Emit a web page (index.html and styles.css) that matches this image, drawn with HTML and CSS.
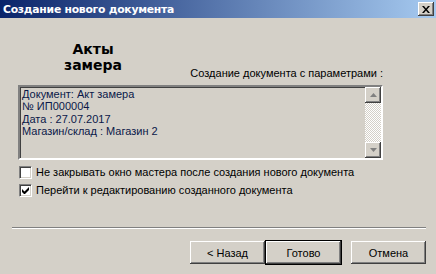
FILE: index.html
```html
<!DOCTYPE html>
<html lang="ru">
<head>
    <meta charset="UTF-8">
    <title>Создание нового документа</title>
    <link rel="stylesheet" href="styles.css">
</head>
<body>
    <div class="window">
        <div class="titlebar">
            <span class="title">Создание нового документа</span>
            <span class="close-btn">
                <svg width="8" height="7" viewBox="0 0 8 7">
                    <path d="M0 0h2l2 2.5 2-2.5h2l-3 3.5 3 3.5h-2l-2-2.5-2 2.5h-2l3-3.5z" fill="#000"/>
                </svg>
            </span>
        </div>

        <div class="content">
            <div class="head">
                <div class="doc-name">Акты<br>замера</div>
                <div class="params-label">Создание документа с параметрами :</div>
            </div>

            <!-- параметры документа -->
            <div class="memo">
                <div class="memo-text">
                    Документ: Акт замера<br>
                    № ИП000004<br>
                    Дата : 27.07.2017<br>
                    Магазин/склад : Магазин 2
                </div>
                <div class="scrollbar">
                    <span class="scroll-btn">
                        <svg width="7" height="4" viewBox="0 0 7 4"><path d="M3.5 0L7 4H0z" fill="#808080"/></svg>
                    </span>
                    <span class="scroll-track"></span>
                    <span class="scroll-btn">
                        <svg width="7" height="4" viewBox="0 0 7 4"><path d="M0 0h7L3.5 4z" fill="#808080"/></svg>
                    </span>
                </div>
            </div>

            <label class="check-row">
                <span class="checkbox"></span>
                Не закрывать окно мастера после создания нового документа
            </label>
            <label class="check-row">
                <span class="checkbox">
                    <svg width="7" height="7" viewBox="0 0 7 7"><path d="M0 2v3l2 2h1l4-4V0L2.5 4.5z" fill="#000"/></svg>
                </span>
                Перейти к редактированию созданного документа
            </label>
        </div>

        <div class="separator"></div>

        <div class="buttons">
            <button class="btn">&lt; Назад</button>
            <button class="btn default">Готово</button>
            <button class="btn cancel">Отмена</button>
        </div>
    </div>
</body>
</html>
```

FILE: styles.css
```css
* {
    margin: 0;
    padding: 0;
    box-sizing: border-box;
}

body {
    width: 436px;
    height: 274px;
    background: #d4d0c8;
    font-family: "Liberation Sans", Arial, sans-serif;
    font-size: 11px;
    color: #000;
    overflow: hidden;
}

.window {
    height: 274px;
}

.titlebar {
    height: 18px;
    display: flex;
    align-items: center;
    justify-content: space-between;
    padding: 0 2px 0 3px;
    background: linear-gradient(to right, #0a246a, #a6caf0);
}

.title {
    color: #fff;
    font-family: "DejaVu Sans", Verdana, sans-serif;
    font-weight: bold;
    font-size: 10.8px;
    letter-spacing: -0.25px;
}

.close-btn {
    width: 16px;
    height: 14px;
    display: flex;
    align-items: center;
    justify-content: center;
    background: #d4d0c8;
    box-shadow: inset -1px -1px #404040, inset 1px 1px #fff, inset -2px -2px #808080;
}

.content {
    padding: 23px 0 0 18px;
}

.head {
    display: flex;
    width: 365px;
    height: 44px;
    justify-content: space-between;
}

.doc-name {
    width: 150px;
    text-align: center;
    font-family: "DejaVu Sans", Verdana, sans-serif;
    font-weight: bold;
    font-size: 14px;
    line-height: 16px;
}

.params-label {
    align-self: flex-end;
    line-height: 13px;
    padding-bottom: 5px;
}

.memo {
    width: 365px;
    height: 75px;
    display: flex;
    border-style: solid;
    border-width: 2px;
    border-color: #808080 #fff #fff #808080;
    box-shadow: inset 1px 1px #404040;
}

.memo-text {
    flex: 1;
    padding: 1px 0 0 2px;
    color: #0a1848;
    line-height: 12.3px;
}

.scrollbar {
    width: 16px;
    display: flex;
    flex-direction: column;
}

.scroll-btn {
    height: 16px;
    display: flex;
    align-items: center;
    justify-content: center;
    background: #d4d0c8;
    box-shadow: inset -1px -1px #404040, inset 1px 1px #fff, inset -2px -2px #808080;
}

.scroll-track {
    flex: 1;
    background: repeating-conic-gradient(#fff 0 25%, #d4d0c8 0 50%) 0 0 / 2px 2px;
}

.check-row {
    display: flex;
    align-items: center;
    gap: 4px;
    height: 18px;
    padding-left: 1px;
}

.check-row:first-of-type {
    margin-top: 3px;
}

.checkbox {
    width: 13px;
    height: 13px;
    display: flex;
    align-items: center;
    justify-content: center;
    background: #fff;
    border-style: solid;
    border-width: 1px;
    border-color: #808080 #fff #fff #808080;
    box-shadow: inset 1px 1px #404040, inset -1px -1px #d4d0c8;
}

.separator {
    margin: 28px 10px 0 12px;
    height: 2px;
    border-top: 1px solid #808080;
    border-bottom: 1px solid #fff;
}

.buttons {
    display: flex;
    justify-content: flex-end;
    padding: 12px 10px 0 0;
}

.btn {
    width: 75px;
    height: 23px;
    background: #d4d0c8;
    border: none;
    font-family: "Liberation Sans", Arial, sans-serif;
    font-size: 11px;
    color: #000;
    box-shadow: inset -1px -1px #404040, inset 1px 1px #fff, inset -2px -2px #808080;
}

.btn.default {
    box-shadow: 0 0 0 1px #000, inset -1px -1px #404040, inset 1px 1px #fff, inset -2px -2px #808080;
    margin-left: 1px;
}

.btn.cancel {
    margin-left: 10px;
}
```
